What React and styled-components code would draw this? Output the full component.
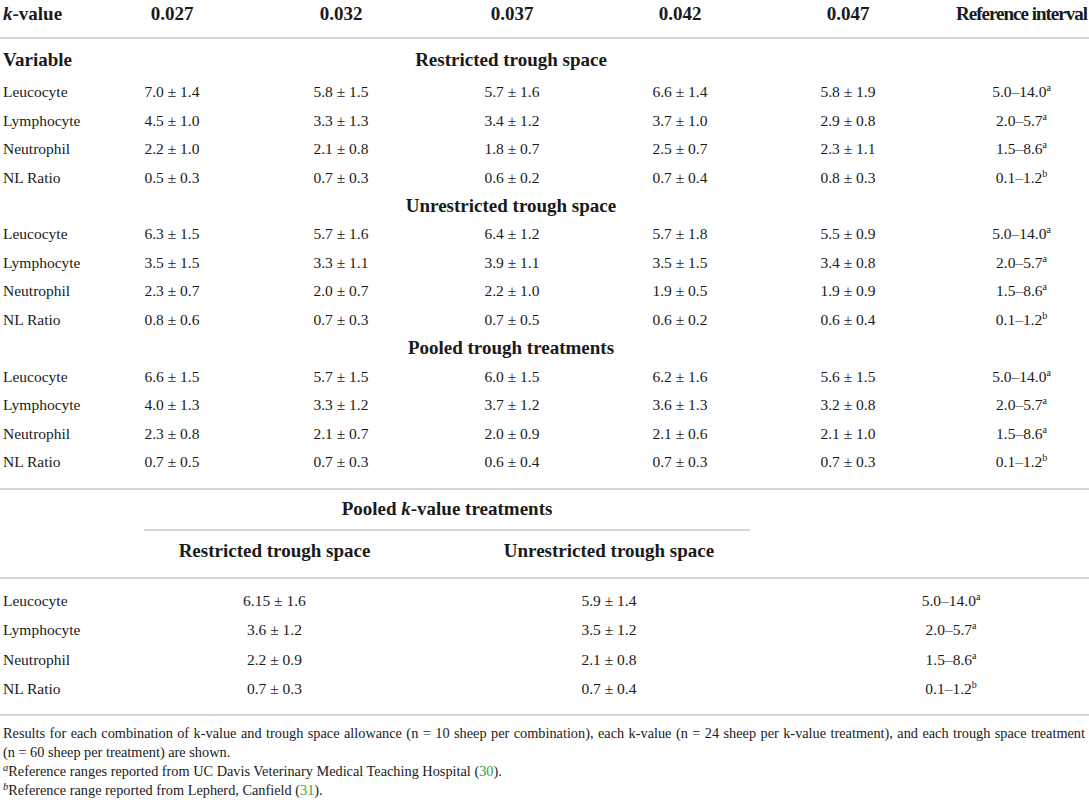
import React from "react";
import styled, { createGlobalStyle } from "styled-components";

const Global = createGlobalStyle`
  html, body { margin: 0; padding: 0; background: #fff; overflow-x: hidden; }
  body { font-family: "Liberation Serif", "Times New Roman", serif; color: #1a1a1a; }
`;

const RULE = "2px solid #d6d6d6";
const UPPER_COLS = "90px 164px 174px 168px 168px 168px 1fr";
const LOWER_COLS = "144px 261px 408px 1fr";

const Page = styled.div`
  width: 1089px;
`;

const Row = styled.div`
  display: grid;
  grid-template-columns: ${(p) => p.$cols};
  height: ${(p) => p.$h || "28.46px"};
  align-items: center;
  padding-top: ${(p) => p.$pt || 0};
  padding-bottom: ${(p) => p.$pb || 0};
  border-bottom: ${(p) => (p.$rule ? RULE : "none")};
  box-sizing: content-box;
`;

const Cell = styled.div`
  font-size: ${(p) => (p.$bold ? "19px" : "15.5px")};
  font-weight: ${(p) => (p.$bold ? 700 : 400)};
  line-height: 28px;
  text-align: ${(p) => (p.$left ? "left" : "center")};
  padding-left: ${(p) => (p.$left ? "3px" : p.$shift ? "22px" : 0)};
  letter-spacing: ${(p) => (p.$tight ? "-1px" : "normal")};
  white-space: nowrap;
  grid-column: ${(p) => p.$span || "auto"};
`;

const SpanHead = styled.div`
  grid-column: 2 / 4;
  margin-right: 63px;
  font-size: 19px;
  font-weight: 700;
  line-height: 28px;
  text-align: center;
  padding: 5px 0 6px;
  border-bottom: ${RULE};
`;

const LowerBody = styled.div`
  padding: 7px 0 10px;
  border-bottom: ${RULE};
`;

const Sup = styled.sup`
  font-size: 10px;
  vertical-align: 6px;
  line-height: 0;
`;

const Notes = styled.div`
  padding: 8px 4px 0 3px;
  font-size: 14.3px;
  line-height: 19px;
`;

const NoteLine = styled.div`
  white-space: nowrap;
  text-align: ${(p) => (p.$justify ? "justify" : "left")};
  text-align-last: ${(p) => (p.$justify ? "justify" : "auto")};
`;

const NoteMark = styled.sup`
  font-style: italic;
  font-size: 10.5px;
  vertical-align: 5px;
  line-height: 0;
`;

const Cite = styled.span`
  color: #2f9e3f;
`;

const refs = [
  ["5.0–14.0", "a"],
  ["2.0–5.7", "a"],
  ["1.5–8.6", "a"],
  ["0.1–1.2", "b"],
];
const vars = ["Leucocyte", "Lymphocyte", "Neutrophil", "NL Ratio"];

const sections = [
  {
    title: "Restricted trough space",
    rows: [
      ["7.0 ± 1.4", "5.8 ± 1.5", "5.7 ± 1.6", "6.6 ± 1.4", "5.8 ± 1.9"],
      ["4.5 ± 1.0", "3.3 ± 1.3", "3.4 ± 1.2", "3.7 ± 1.0", "2.9 ± 0.8"],
      ["2.2 ± 1.0", "2.1 ± 0.8", "1.8 ± 0.7", "2.5 ± 0.7", "2.3 ± 1.1"],
      ["0.5 ± 0.3", "0.7 ± 0.3", "0.6 ± 0.2", "0.7 ± 0.4", "0.8 ± 0.3"],
    ],
  },
  {
    title: "Unrestricted trough space",
    rows: [
      ["6.3 ± 1.5", "5.7 ± 1.6", "6.4 ± 1.2", "5.7 ± 1.8", "5.5 ± 0.9"],
      ["3.5 ± 1.5", "3.3 ± 1.1", "3.9 ± 1.1", "3.5 ± 1.5", "3.4 ± 0.8"],
      ["2.3 ± 0.7", "2.0 ± 0.7", "2.2 ± 1.0", "1.9 ± 0.5", "1.9 ± 0.9"],
      ["0.8 ± 0.6", "0.7 ± 0.3", "0.7 ± 0.5", "0.6 ± 0.2", "0.6 ± 0.4"],
    ],
  },
  {
    title: "Pooled trough treatments",
    rows: [
      ["6.6 ± 1.5", "5.7 ± 1.5", "6.0 ± 1.5", "6.2 ± 1.6", "5.6 ± 1.5"],
      ["4.0 ± 1.3", "3.3 ± 1.2", "3.7 ± 1.2", "3.6 ± 1.3", "3.2 ± 0.8"],
      ["2.3 ± 0.8", "2.1 ± 0.7", "2.0 ± 0.9", "2.1 ± 0.6", "2.1 ± 1.0"],
      ["0.7 ± 0.5", "0.7 ± 0.3", "0.6 ± 0.4", "0.7 ± 0.3", "0.7 ± 0.3"],
    ],
  },
];

const pooledK = [
  ["6.15 ± 1.6", "5.9 ± 1.4"],
  ["3.6 ± 1.2", "3.5 ± 1.2"],
  ["2.2 ± 0.9", "2.1 ± 0.8"],
  ["0.7 ± 0.3", "0.7 ± 0.4"],
];

const Ref = ({ i }) => (
  <>
    {refs[i][0]}
    <Sup>{refs[i][1]}</Sup>
  </>
);

export default function App() {
  return (
    <Page>
      <Global />
      <Row $cols={UPPER_COLS} $h="28px" $pb="9px" $rule>
        <Cell $bold $left>
          <i>k</i>-value
        </Cell>
        {["0.027", "0.032", "0.037", "0.042", "0.047"].map((h) => (
          <Cell $bold key={h}>{h}</Cell>
        ))}
        <Cell $bold $shift $tight>Reference interval</Cell>
      </Row>

      {sections.map((s, si) => (
        <React.Fragment key={s.title}>
          <Row
            $cols={UPPER_COLS}
            $h={si === 0 ? "28px" : undefined}
            $pt={si === 0 ? "7px" : 0}
            $pb={si === 0 ? "4px" : 0}
          >
            <Cell $bold $left>{si === 0 ? "Variable" : ""}</Cell>
            <Cell $bold $span="2 / 7">{s.title}</Cell>
          </Row>
          {s.rows.map((r, ri) => (
            <Row
              $cols={UPPER_COLS}
              key={vars[ri]}
              $pb={si === 2 && ri === 3 ? "12px" : 0}
              $rule={si === 2 && ri === 3}
            >
              <Cell $left>{vars[ri]}</Cell>
              {r.map((v, vi) => (
                <Cell key={vi}>{v}</Cell>
              ))}
              <Cell $shift>
                <Ref i={ri} />
              </Cell>
            </Row>
          ))}
        </React.Fragment>
      ))}

      <Row $cols={LOWER_COLS} $h="auto">
        <SpanHead>
          Pooled <i>k</i>-value treatments
        </SpanHead>
      </Row>
      <Row $cols={LOWER_COLS} $h="28px" $pt="6px" $pb="12px" $rule>
        <Cell $left />
        <Cell $bold>Restricted trough space</Cell>
        <Cell $bold>Unrestricted trough space</Cell>
        <Cell />
      </Row>
      <LowerBody>
        {pooledK.map((r, ri) => (
          <Row $cols={LOWER_COLS} $h="29.3px" key={vars[ri]}>
            <Cell $left>{vars[ri]}</Cell>
            <Cell>{r[0]}</Cell>
            <Cell>{r[1]}</Cell>
            <Cell>
              <Ref i={ri} />
            </Cell>
          </Row>
        ))}
      </LowerBody>

      <Notes>
        <NoteLine $justify>
          Results for each combination of k-value and trough space allowance (n = 10 sheep per
          combination), each k-value (n = 24 sheep per k-value treatment), and each trough space
          treatment
        </NoteLine>
        <NoteLine>(n = 60 sheep per treatment) are shown.</NoteLine>
        <NoteLine>
          <NoteMark>a</NoteMark>Reference ranges reported from UC Davis Veterinary Medical Teaching
          Hospital (<Cite>30</Cite>).
        </NoteLine>
        <NoteLine>
          <NoteMark>b</NoteMark>Reference range reported from Lepherd, Canfield (<Cite>31</Cite>).
        </NoteLine>
      </Notes>
    </Page>
  );
}
